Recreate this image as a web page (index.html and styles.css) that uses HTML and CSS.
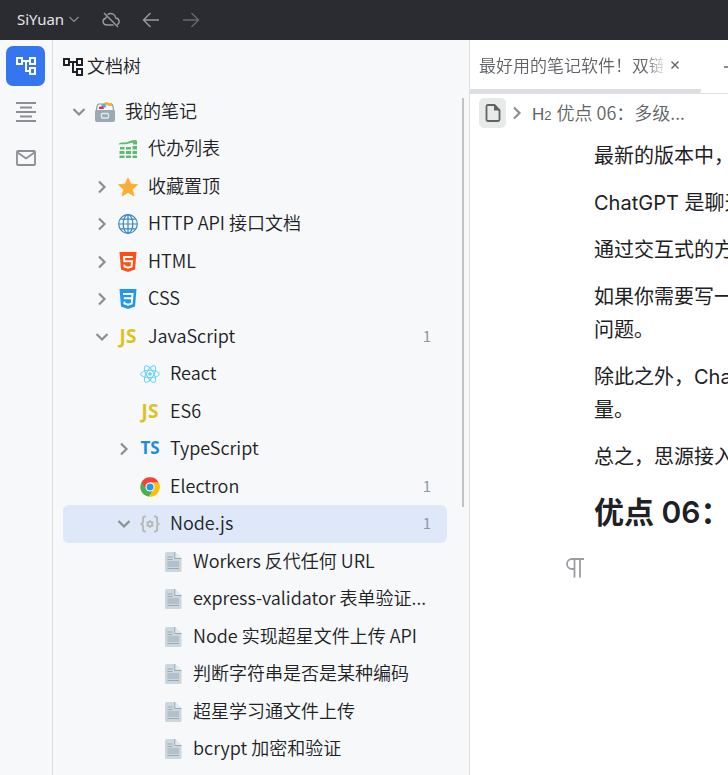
FILE: index.html
```html
<!DOCTYPE html>
<html lang="zh-CN">
<head>
    <meta charset="UTF-8">
    <meta name="viewport" content="width=device-width, initial-scale=1.0">
    <title>SiYuan</title>
    <link rel="stylesheet" href="styles.css">
</head>
<body>
    <!-- Iconos -->
    <svg class="symbols" aria-hidden="true">
        <symbol id="icon-tree" viewBox="2 3 20 18"><path fill="currentColor" d="M22 11V3h-7v3H9V3H2v8h7V8h2v10h4v3h7v-8h-7v3h-2V8h2v3h7zM7 9H4V5h3v4zm10 6h3v4h-3v-4zm0-10h3v4h-3V5z"/></symbol>
        <symbol id="icon-down" viewBox="0 0 20 20"><path d="M4.500 7l5.500 5.500L15.500 7" fill="none" stroke="currentColor" stroke-width="2.200"/></symbol>
        <symbol id="icon-right" viewBox="0 0 20 20"><path d="M7 4.500l5.500 5.500L7 15.500" fill="none" stroke="currentColor" stroke-width="2.200"/></symbol>
        <symbol id="icon-box" viewBox="0 0 20 20">
            <path d="M3.500 1.500h13Q18 1.500 18.500 4l1 6H.5l1-6Q2 1.500 3.500 1.500z" fill="#8899a6"/>
            <path d="M4 2.500h12q1 0 1.300 1.500l.9 5.500H1.800L2.700 4Q3 2.500 4 2.500z" fill="#f5f8fa"/>
            <path d="M8.500 1l4-1 1.500 2.500-4 1z" fill="#ffac33"/>
            <path d="M12.500 1.500L17 1v3h-4z" fill="#ffac33"/>
            <path d="M6 2.800l3.500-1.300L11.500 5 8 6z" fill="#55acee"/>
            <path d="M4.200 4.800l3.800-.6L9 7H3.800z" fill="#dd2e44"/>
            <path d="M0 10q0-2 2-2h16q2 0 2 2v8q0 2-2 2H2q-2 0-2-2z" fill="#99aab5"/>
            <rect x="6.500" y="11.500" width="7" height="4.500" rx="1" fill="#99aab5" stroke="#e1e8ed" stroke-width="1.400"/>
        </symbol>
        <symbol id="icon-sheet" viewBox="0 0 20 20" fill="#5dbb70">
            <path d="M0 5.500C3 2.500 6 4 8 3.500s5-2.500 10-2.500l1 1v3.500h-4V3.800C12 4 9 5.500 7 5.300S3 5 0 5.500z"/>
            <path d="M2 8h4.500v2.500H2zm6 0h5v2.500H8zm6.500-1H19v3.500h-4.500zM1.500 12h5v3h-5zM8 12h5v3H8zm6.500 0H19v3h-4.500zM1.500 16.500h5V19h-5zm6.500 0h5V19H8zm6.500 0H19V19h-4.500z"/>
        </symbol>
        <symbol id="icon-star" viewBox="0 0 20 20"><path d="M10 .8l2.700 6.300 6.900.6-5.200 4.500 1.600 6.800-6-3.600L4 19l1.600-6.800L.4 7.700l6.900-.6z" fill="#ffac33" stroke="#ffac33" stroke-width=".8" stroke-linejoin="round"/></symbol>
        <symbol id="icon-globe" viewBox="0 0 20 20"><g fill="none" stroke="#3b88c3" stroke-width="1.200"><circle cx="10" cy="10" r="9.300"/><ellipse cx="10" cy="10" rx="4.800" ry="9.300"/><path d="M10 .7v18.600M.7 10h18.600M2.500 5.200h15M2.500 14.800h15"/></g></symbol>
        <symbol id="icon-html" viewBox="0 0 20 20"><path d="M1.500 0h17L17 17.600 10 20l-7-2.400z" fill="#ff4f12"/><path d="M14.800 5H6l.3 4.300h7.800l-.5 5.300-3.600 1.200-3.500-1.200-.2-2" fill="none" stroke="#fff" stroke-width="2"/></symbol>
        <symbol id="icon-css" viewBox="0 0 20 20"><path d="M1.500 0h17L17 17.600 10 20l-7-2.400z" fill="#2196f3"/><path d="M5 5h9.500l-.8 9.600-3.700 1.200-3.500-1.200-.2-2M5.800 9.300h8" fill="none" stroke="#fff" stroke-width="2"/></symbol>
        <symbol id="icon-react" viewBox="0 0 20 20"><g fill="none" stroke="#61d4f7"><ellipse cx="10" cy="10" rx="9.400" ry="3.700"/><ellipse cx="10" cy="10" rx="9.400" ry="3.700" transform="rotate(60 10 10)"/><ellipse cx="10" cy="10" rx="9.400" ry="3.700" transform="rotate(120 10 10)"/></g><circle cx="10" cy="10" r="1.800" fill="#61d4f7"/></symbol>
        <symbol id="icon-chrome" viewBox="0 0 20 20">
            <path d="M10 10L1.500 5.200A9.800 9.800 0 0 0 9 19.750L13.900 12z" fill="#4caf50"/>
            <path d="M10 10l3.900 2L9 19.750A9.800 9.800 0 0 0 18.700 5.500H10z" fill="#ffc107"/>
            <path d="M10 5.500h8.700A9.800 9.800 0 0 0 1.500 5.200L6 12z" fill="#f44336"/>
            <circle cx="10" cy="10" r="4.600" fill="#fff"/><circle cx="10" cy="10" r="3.500" fill="#2196f3"/>
        </symbol>
        <symbol id="icon-node" viewBox="0 0 20 20"><g fill="none" stroke="#b9babb" stroke-width="2"><path d="M6 2.500H5q-2 0-2 2v3Q3 10 .5 10 3 10 3 12.500v3q0 2 2 2h1M14 2.500h1q2 0 2 2v3q0 2.500 2.500 2.500-2.500 0-2.500 2.500v3q0 2-2 2h-1"/><circle cx="10" cy="10" r="2.300"/><path stroke-width="1.500" d="M10 6v1.500M10 12.500V14M6.500 8l1.300.8M12.200 11.200l1.300.8M6.500 12l1.300-.8M12.200 8.800l1.300-.8"/></g></symbol>
        <symbol id="icon-doc" viewBox="0 0 20 20">
            <path d="M3.500 0H12l6.500 6.500v12q0 1.500-1.500 1.500H3.500Q2 20 2 18.500v-17Q2 0 3.500 0z" fill="#ccd6dd"/>
            <path d="M12 0l6.500 6.500H12z" fill="#e3eaee"/>
            <path d="M11.800 0v6.500h6.700M4.500 5h5M4.500 7.500h5M4.500 10h11.500M4.500 12h11.500M4.500 14h11.500M4.500 16.500h11.500" fill="none" stroke="#99aab5"/>
        </symbol>
    </svg>

    <header class="topbar">
        <button class="workspace">SiYuan
            <svg width="12" height="12" viewBox="0 0 12 12" fill="none" stroke="#8a8b8e" stroke-width="1.200"><path d="M1.500 4L6 8.500 10.500 4"/></svg>
        </button>
        <button class="bar-btn" aria-label="云端同步">
            <svg width="18" height="16" viewBox="0 0 18 16" fill="none" stroke="currentColor" stroke-width="1.400"><path d="M5.500 2.500C9 .2 13 2 13.700 6c4 .3 4.600 5 1.500 6.600M11.500 13H5C.3 13-.2 7.200 3.800 6.200l.6-1.400M2 1l14 14"/></svg>
        </button>
        <button class="bar-btn" aria-label="后退">
            <svg width="18" height="16" viewBox="0 0 18 16" fill="none" stroke="currentColor" stroke-width="1.400"><path d="M17 8H2M8.500 1L1.500 8l7 7"/></svg>
        </button>
        <button class="bar-btn dim" aria-label="前进">
            <svg width="18" height="16" viewBox="0 0 18 16" fill="none" stroke="currentColor" stroke-width="1.400"><path d="M1 8h15M9.500 1l7 7-7 7"/></svg>
        </button>
    </header>

    <div class="layout">
        <nav class="dock">
            <button class="dock-btn active" aria-label="文档树"><svg width="20" height="18"><use href="#icon-tree"/></svg></button>
            <button class="dock-btn" aria-label="大纲">
                <svg width="20" height="20" viewBox="0 0 20 20" stroke="currentColor" stroke-width="1.800"><path d="M0 1h20M4 5.500h12M0 10h20M4 14.500h12M0 19h20"/></svg>
            </button>
            <button class="dock-btn" aria-label="收集箱">
                <svg width="20" height="16" viewBox="0 0 20 16" fill="none" stroke="currentColor" stroke-width="1.800"><rect x="1" y="1" width="18" height="14" rx="1"/><path d="M1.500 2.500L10 8.500l8.500-6"/></svg>
            </button>
        </nav>

        <aside class="panel">
            <h2 class="panel-title"><svg width="20" height="18"><use href="#icon-tree"/></svg><span class="label">文档树</span></h2>
            <div class="panel-body">
                <ul class="tree">
                    <li class="row"><button class="toggle" aria-label="折叠"><svg><use href="#icon-down"/></svg></button><svg class="icon"><use href="#icon-box"/></svg><a class="label" href="#">我的笔记</a></li>
                    <li class="row level1"><span class="toggle"></span><svg class="icon"><use href="#icon-sheet"/></svg><a class="label" href="#">代办列表</a></li>
                    <li class="row level1"><button class="toggle" aria-label="展开"><svg><use href="#icon-right"/></svg></button><svg class="icon"><use href="#icon-star"/></svg><a class="label" href="#">收藏置顶</a></li>
                    <li class="row level1"><button class="toggle" aria-label="展开"><svg><use href="#icon-right"/></svg></button><svg class="icon"><use href="#icon-globe"/></svg><a class="label" href="#">HTTP API 接口文档</a></li>
                    <li class="row level1"><button class="toggle" aria-label="展开"><svg><use href="#icon-right"/></svg></button><svg class="icon"><use href="#icon-html"/></svg><a class="label" href="#">HTML</a></li>
                    <li class="row level1"><button class="toggle" aria-label="展开"><svg><use href="#icon-right"/></svg></button><svg class="icon"><use href="#icon-css"/></svg><a class="label" href="#">CSS</a></li>
                    <li class="row level1"><button class="toggle" aria-label="折叠"><svg><use href="#icon-down"/></svg></button><span class="icon js">JS</span><a class="label" href="#">JavaScript</a><span class="count">1</span></li>
                    <li class="row level2"><span class="toggle"></span><svg class="icon"><use href="#icon-react"/></svg><a class="label" href="#">React</a></li>
                    <li class="row level2"><span class="toggle"></span><span class="icon js">JS</span><a class="label" href="#">ES6</a></li>
                    <li class="row level2"><button class="toggle" aria-label="展开"><svg><use href="#icon-right"/></svg></button><span class="icon ts">TS</span><a class="label" href="#">TypeScript</a></li>
                    <li class="row level2"><span class="toggle"></span><svg class="icon"><use href="#icon-chrome"/></svg><a class="label" href="#">Electron</a><span class="count">1</span></li>
                    <li class="row level2 current"><button class="toggle" aria-label="折叠"><svg><use href="#icon-down"/></svg></button><svg class="icon"><use href="#icon-node"/></svg><a class="label" href="#">Node.js</a><span class="count">1</span></li>
                    <li class="row level3"><span class="toggle"></span><svg class="icon"><use href="#icon-doc"/></svg><a class="label" href="#">Workers 反代任何 URL</a></li>
                    <li class="row level3"><span class="toggle"></span><svg class="icon"><use href="#icon-doc"/></svg><a class="label" href="#">express-validator 表单验证...</a></li>
                    <li class="row level3"><span class="toggle"></span><svg class="icon"><use href="#icon-doc"/></svg><a class="label" href="#">Node 实现超星文件上传 API</a></li>
                    <li class="row level3"><span class="toggle"></span><svg class="icon"><use href="#icon-doc"/></svg><a class="label" href="#">判断字符串是否是某种编码</a></li>
                    <li class="row level3"><span class="toggle"></span><svg class="icon"><use href="#icon-doc"/></svg><a class="label" href="#">超星学习通文件上传</a></li>
                    <li class="row level3"><span class="toggle"></span><svg class="icon"><use href="#icon-doc"/></svg><a class="label" href="#">bcrypt 加密和验证</a></li>
                </ul>
                <div class="scroll-thumb"></div>
            </div>
        </aside>

        <main class="editor">
            <div class="tabs">
                <div class="tab">
                    <a class="tab-text" href="#">最好用的笔记软件！双链</a>
                    <button class="tab-close" aria-label="关闭"><svg width="8" height="8" viewBox="0 0 8 8" stroke="currentColor" stroke-width="1.400"><path d="M.5.5l7 7M7.500.5l-7 7"/></svg></button>
                </div>
                <button class="tab-add" aria-label="新建"><svg width="14" height="14" viewBox="0 0 14 14" stroke="currentColor" stroke-width="1.600"><path d="M0 7h14M7 0v14"/></svg></button>
            </div>
            <div class="breadcrumb">
                <button class="crumb-doc" aria-label="文档"><svg width="16" height="18" viewBox="0 0 16 18"><path d="M3 1h6.500L14.500 6v9.500q0 1.500-1.500 1.500H3q-1.500 0-1.500-1.500v-13Q1.500 1 3 1z" fill="none" stroke="currentColor" stroke-width="1.800"/><path d="M9 1v5.500h5.500z" fill="currentColor"/></svg></button>
                <svg class="crumb-arrow"><use href="#icon-right"/></svg>
                <a class="crumb" href="#"><span class="crumb-type">H<small>2</small></span>优点 06：多级...</a>
            </div>
            <article class="content">
                <p>最新的版本中，</p>
                <p>ChatGPT 是聊天</p>
                <p>通过交互式的方</p>
                <p>如果你需要写一<br>问题。</p>
                <p>除此之外，Chat<br>量。</p>
                <p>总之，思源接入</p>
                <h2>优点 06：</h2>
            </article>
            <button class="gutter" aria-label="段落"><svg width="18" height="20" viewBox="0 0 18 20" fill="none" stroke="currentColor" stroke-width="1.800"><path d="M18 1H6a5 5 0 0 0 0 10h2M8.500 1v18.500M14 1v18.500"/></svg></button>
        </main>
    </div>
</body>
</html>
```
FILE: styles.css
```css
* {
    box-sizing: border-box;
}

body {
    margin: 0;
    height: 100vh;
    display: flex;
    flex-direction: column;
    overflow: hidden;
    font-family: "Noto Sans CJK SC", sans-serif;
    font-size: 18px;
    color: #202124;
    background: #fff;
}

button {
    padding: 0;
    border: 0;
    background: none;
    font: inherit;
    color: inherit;
    display: flex;
    align-items: center;
    justify-content: center;
    cursor: pointer;
}

a {
    color: inherit;
    text-decoration: none;
}

svg {
    flex-shrink: 0;
}

.symbols {
    position: absolute;
    width: 0;
    height: 0;
}

/* Barra superior */
.topbar {
    flex: 0 0 40px;
    display: flex;
    align-items: center;
    gap: 22px;
    padding-left: 17px;
    background: #2b2c31;
    color: #e4e5e7;
}

.workspace {
    gap: 4px;
    padding-bottom: 2px;
    font-family: "Noto Sans", sans-serif;
    font-size: 15px;
}

.bar-btn {
    color: #9b9c9f;
}

.bar-btn.dim {
    color: #67686b;
}

.layout {
    flex: 1;
    display: flex;
    min-height: 0;
}

/* Barra lateral */
.dock {
    flex: 0 0 53px;
    display: flex;
    flex-direction: column;
    gap: 6px;
    padding: 6px 7px 6px 6px;
    background: #f6f8fa;
    border-right: 1px solid #dddfe2;
    color: #8b8e93;
}

.dock-btn {
    height: 40px;
    border-radius: 7px;
}

.dock-btn.active {
    background: #3575f0;
    color: #fff;
}

/* Panel de documentos */
.panel {
    flex: 0 0 417px;
    display: flex;
    flex-direction: column;
    background: #f6f8fa;
    border-right: 1px solid #dddfe2;
}

.panel-title {
    display: flex;
    align-items: center;
    gap: 4px;
    height: 53px;
    margin: 0;
    padding-left: 10px;
    font-size: 18px;
    font-weight: 300;
}

.panel-body {
    flex: 1;
    display: flex;
    min-height: 0;
    padding: 0 5px 0 10px;
    gap: 15px;
}

.label {
    padding-bottom: 4px;
    font-weight: 350;
}

.tree {
    flex: 1;
    margin: 0;
    padding: 0;
    list-style: none;
}

.row {
    display: flex;
    align-items: center;
    height: 37px;
    padding: 0 16px 0 6px;
    border-radius: 6px;
    white-space: nowrap;
}

.row:nth-child(even) {
    height: 38px;
}

.row.level1 {
    padding-left: 29px;
}

.row.level2 {
    padding-left: 51px;
}

.row.level3 {
    padding-left: 74px;
}

.row.current {
    background: #dee8f9;
}

.toggle,
.toggle svg {
    width: 20px;
    height: 20px;
    color: #8b8e93;
}

.icon {
    width: 20px;
    height: 20px;
    margin: 0 10px 0 6px;
}

.js,
.ts {
    font-family: "Open Sans", sans-serif;
    font-size: 19px;
    line-height: 18px;
    font-weight: 700;
    text-align: center;
    color: #dcc31f;
}

.ts {
    font-size: 17px;
    color: #1a8fe0;
}

.count {
    margin-left: auto;
    padding-bottom: 3px;
    font-size: 15px;
    color: #8f98a5;
}

.scroll-thumb {
    width: 2px;
    height: 60%;
    margin-top: 5px;
    background: #c0c3c6;
}

/* Editor */
.editor {
    flex: 1;
    min-width: 0;
    overflow: hidden;
    color: #202124;
}

.tabs {
    display: flex;
    height: 54px;
    gap: 23px;
    border-bottom: 1px solid #dddfe2;
    color: #5f6368;
}

.tab {
    flex: 0 0 231px;
    display: flex;
    align-items: center;
    gap: 8px;
    padding-left: 9px;
    border-bottom: 4px solid #dcdee1;
    border-bottom-right-radius: 2px;
}

.tab-text {
    width: 184px;
    overflow: hidden;
    white-space: nowrap;
    font-size: 17px;
    font-weight: 350;
    mask-image: linear-gradient(to right, #000 90%, rgba(0, 0, 0, 0.2));
}

.breadcrumb {
    display: flex;
    align-items: center;
    height: 38px;
    padding-left: 9px;
    gap: 1px;
    color: #5f6368;
    font-weight: 350;
    white-space: nowrap;
}

.crumb-doc {
    width: 27px;
    height: 30px;
    border-radius: 5px;
    background: #e8eaea;
}

.crumb-arrow {
    width: 20px;
    height: 20px;
    margin-right: 4px;
    color: #8b8e93;
}

.crumb {
    display: flex;
    align-items: baseline;
    gap: 5px;
    padding-bottom: 2px;
}

.crumb-type {
    font-family: "Liberation Sans", sans-serif;
    font-size: 17px;
}

.crumb-type small {
    font-size: 13px;
}

.content {
    padding: 8px 0 0 124px;
    font-family: Inter, "Noto Sans CJK SC", sans-serif;
    font-size: 20px;
    line-height: 33px;
    white-space: nowrap;
}

.content p {
    margin: 0 0 14px;
}

.content h2 {
    margin: 0;
    font-size: 30px;
    line-height: 48px;
    font-weight: 600;
}

.gutter {
    margin: 22px 0 0 96px;
    color: #9a9da1;
}
```
